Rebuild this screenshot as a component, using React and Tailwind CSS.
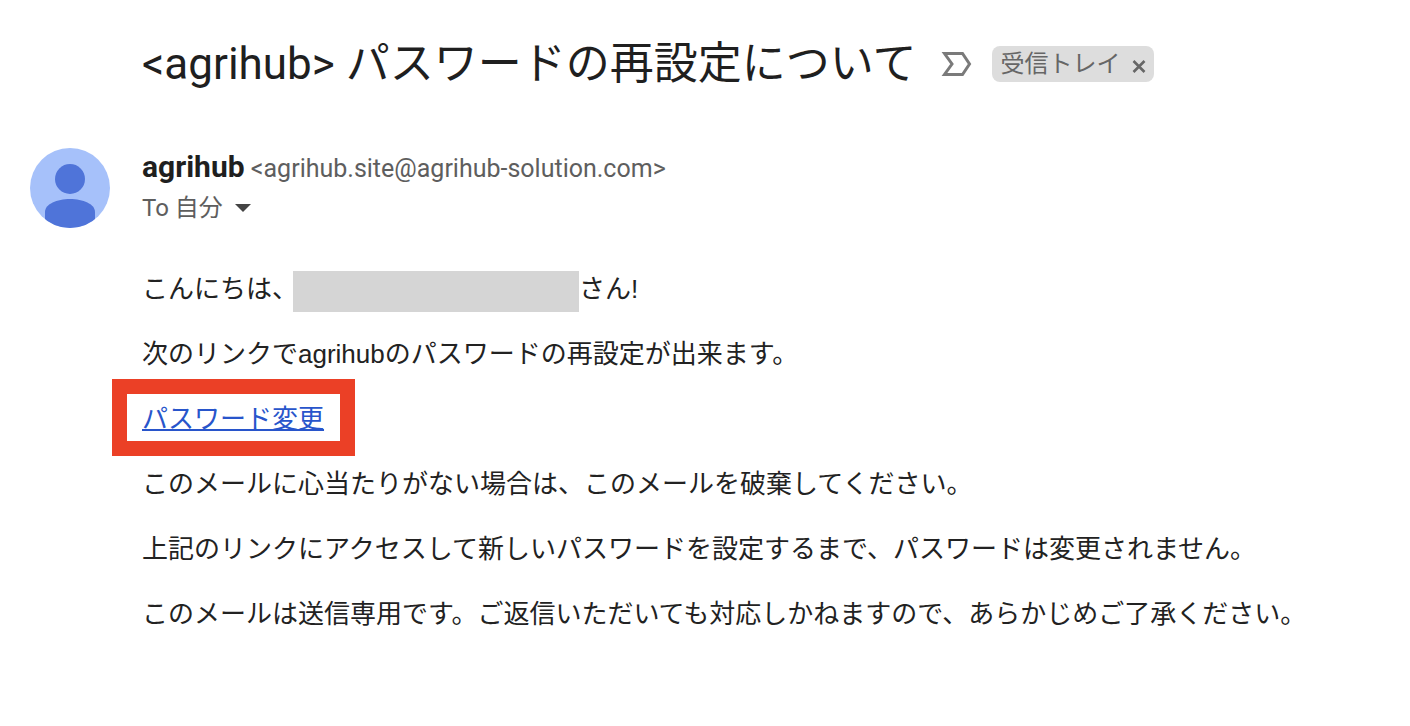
import React from 'react';

const paragraphs = [
  'このメールに心当たりがない場合は、このメールを破棄してください。',
  '上記のリンクにアクセスして新しいパスワードを設定するまで、パスワードは変更されません。',
  'このメールは送信専用です。ご返信いただいても対応しかねますので、あらかじめご了承ください。',
];

function Avatar() {
  return (
    <svg viewBox="0 0 80 80" className="size-20 shrink-0" aria-hidden="true">
      <defs>
        <clipPath id="avatar-clip">
          <circle cx="40" cy="40" r="40" />
        </clipPath>
      </defs>
      <circle cx="40" cy="40" r="40" fill="#a6c1fa" />
      <g clipPath="url(#avatar-clip)" fill="#4f74d9">
        <circle cx="40" cy="31" r="15" />
        <path d="M15 80V64c0-8 12-13 25-13s25 5 25 13v16z" />
      </g>
    </svg>
  );
}

export default function App() {
  return (
    <main className="min-h-screen bg-white pl-[30px] pr-8 pt-9 font-['Roboto','Noto_Sans_CJK_JP',sans-serif] text-[#1f1f1f]">
      <header className="flex items-center pl-28">
        <h1 className="text-[44px] leading-[56px] whitespace-nowrap">&lt;agrihub&gt; パスワードの再設定について</h1>
        <button type="button" aria-label="重要マーク" className="ml-6">
          <svg width="32" height="24" viewBox="0 0 32 24" fill="none" stroke="#7a7a7a" strokeWidth="3">
            <path d="M4.5 1.5H22.5L29.5 12L22.5 22.5H4.5L12 12z" />
          </svg>
        </button>
        <div className="ml-5 flex h-9 items-center gap-3 rounded-lg bg-[#ddd] px-2 text-2xl text-[#666]">
          <span>受信トレイ</span>
          <button type="button" aria-label="ラベルを削除" className="pt-1">
            <svg width="14" height="13" viewBox="0 0 14 13" stroke="#666" strokeWidth="2.6">
              <path d="M1.5 1l11 11M12.5 1l-11 11" />
            </svg>
          </button>
        </div>
      </header>

      <section className="mt-14 flex gap-8">
        <Avatar />
        <div>
          <p className="text-[25px] leading-[38px] text-[#5e5e5e]">
            <strong className="text-[30px] font-bold text-[#1f1f1f]">agrihub</strong> &lt;agrihub.site@agrihub-solution.com&gt;
          </p>
          <button type="button" className="flex items-center gap-3 text-2xl leading-10 text-[#5e5e5e]">
            To 自分
            <svg width="16" height="8" viewBox="0 0 16 8" fill="#444">
              <path d="M0 0h16L8 8z" />
            </svg>
          </button>
        </div>
      </section>

      <article className="flex flex-col items-start gap-6 pl-28 pt-[43px] font-['Liberation_Sans','Noto_Sans_CJK_JP',sans-serif] text-[26px] leading-[41px] text-[#222]">
        <p className="-mb-[2px] flex leading-[37px]">
          こんにちは、
          <span className="-ml-[5px] h-[41px] w-[286px] bg-[#d5d5d5]" />
          さん!
        </p>
        <p>次のリンクでagrihubのパスワードの再設定が出来ます。</p>
        <a
          href="#reset"
          className="-mx-[30px] -mt-5 -mb-4 border-[15px] border-[#eb4026] pt-[5px] pr-4 pb-px pl-[15px] text-[#2855cb] underline decoration-2"
        >
          パスワード変更
        </a>
        {paragraphs.map(text => (
          <p key={text}>{text}</p>
        ))}
      </article>
    </main>
  );
}
